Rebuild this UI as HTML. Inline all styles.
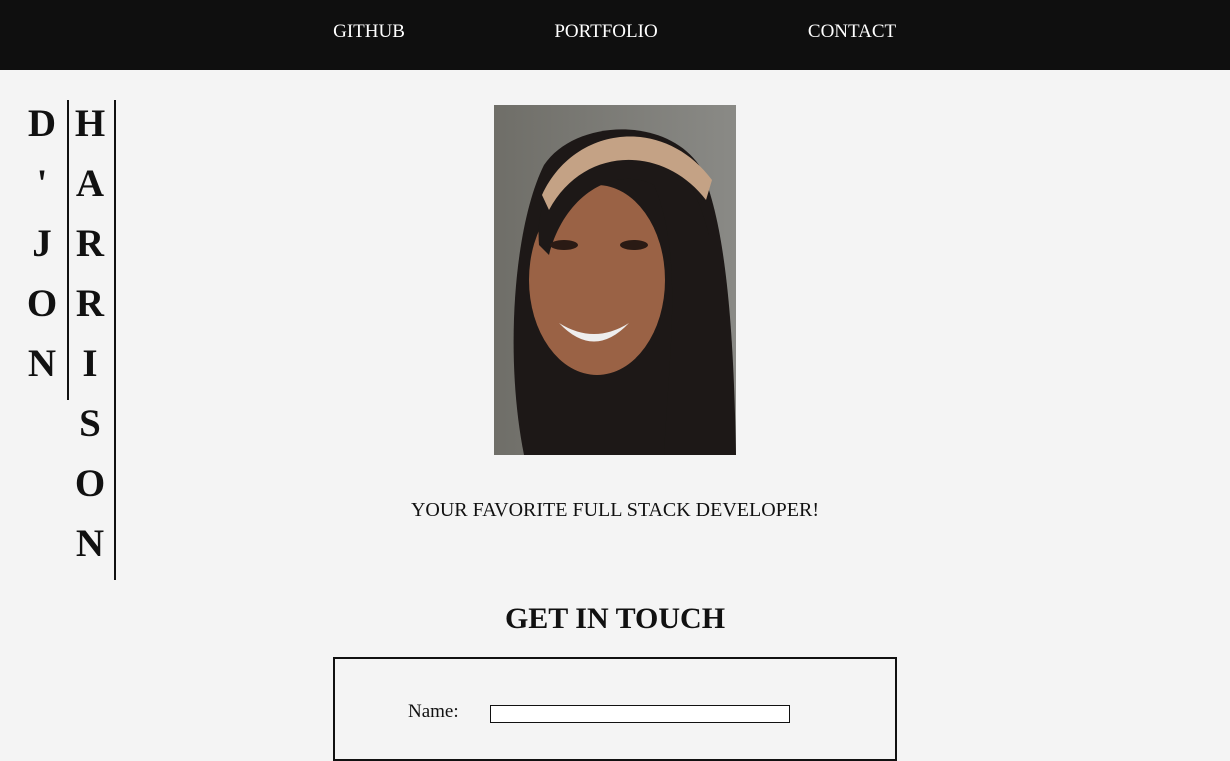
<!DOCTYPE html>
<html><head><style>
body{margin:0;width:1230px;height:742px;background:#f4f4f4;font-family:"Liberation Serif",serif;position:relative;overflow:hidden;color:#111}
.nav{position:absolute;left:0;top:0;width:1230px;height:70px;background:#0f0f0f}
.nav span{position:absolute;top:21px;color:#fff;font-size:19px;transform:translateX(-50%)}
.l{position:absolute;font-weight:bold;font-size:39px;width:40px;text-align:center;line-height:60px}
.v{position:absolute;width:2px;background:#111}
</style></head><body>
<div class="nav"><span style="left:369px">GITHUB</span><span style="left:606px">PORTFOLIO</span><span style="left:852px">CONTACT</span></div>
<div class="l" style="left:22px;top:94px">D<br>'<br>J<br>O<br>N</div>
<div class="v" style="left:67px;top:100px;height:300px"></div>
<div class="l" style="left:70px;top:94px">H<br>A<br>R<br>R<br>I<br>S<br>O<br>N</div>
<div class="v" style="left:114px;top:100px;height:480px"></div>
<svg style="position:absolute;left:494px;top:105px" width="242" height="350">
<defs><linearGradient id="bg" x1="0" y1="0" x2="1" y2="0"><stop offset="0" stop-color="#6f6e68"/><stop offset="1" stop-color="#8a8a86"/></linearGradient></defs>
<rect width="242" height="350" fill="url(#bg)"/>
<path d="M30 350 C10 250 20 120 50 60 C80 15 170 10 205 60 C235 120 240 250 242 350Z" fill="#1d1817"/>
<ellipse cx="103" cy="175" rx="68" ry="95" fill="#9a6245"/>
<path d="M45 140 C40 80 80 40 130 35 C170 35 200 70 215 130 L215 350 L170 350 C175 250 190 150 160 80 C120 60 70 90 55 150Z" fill="#1d1817"/>
<path d="M48 90 C80 20 170 10 218 75 L212 95 C170 40 90 40 55 105Z" fill="#c4a285"/>
<path d="M65 218 Q100 240 135 218 Q100 255 65 218Z" fill="#eee"/>
<ellipse cx="70" cy="140" rx="14" ry="5" fill="#2a1a14"/><ellipse cx="140" cy="140" rx="14" ry="5" fill="#2a1a14"/>
</svg>
<div style="position:absolute;left:0;width:1230px;top:499px;text-align:center;font-size:20px">YOUR FAVORITE FULL STACK DEVELOPER!</div>
<div style="position:absolute;left:0;width:1230px;top:602px;text-align:center;font-size:30px;font-weight:bold">GET IN TOUCH</div>
<div style="position:absolute;left:333px;top:657px;width:560px;height:100px;border:2px solid #111"></div>
<div style="position:absolute;left:408px;top:701px;font-size:19px">Name:</div>
<div style="position:absolute;left:490px;top:705px;width:298px;height:16px;border:1px solid #111;background:#fff"></div>
</body></html>
